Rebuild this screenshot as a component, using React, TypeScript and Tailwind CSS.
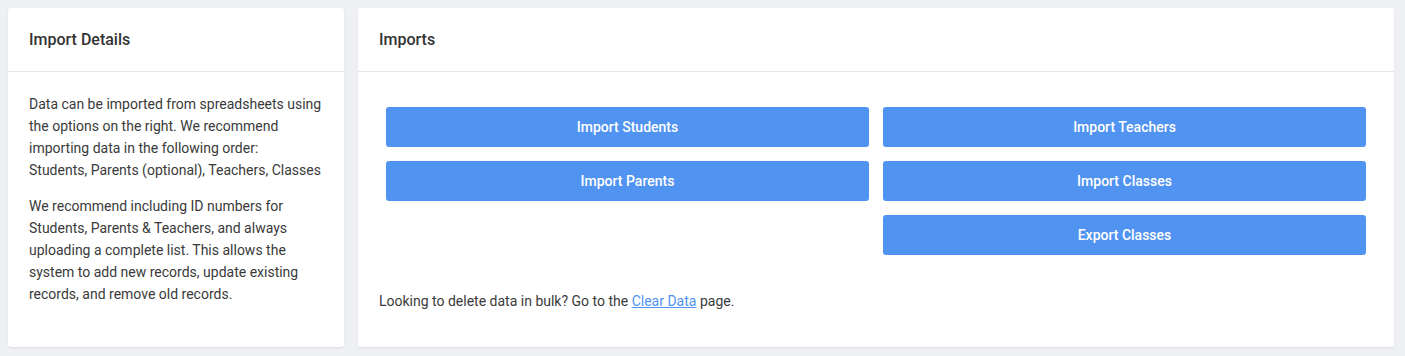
import React from 'react';

const ImportButton: React.FC<{ label: string }> = ({ label }) => (
  <button className="h-10 w-full rounded-[3px] bg-[#5193f0] text-[14px] font-medium text-white">
    {label}
  </button>
);

export default function App() {
  return (
    <div className="min-h-[356px] bg-[#eff0f4] pt-2 pl-2 pr-[11px] pb-[9px] font-['Roboto',sans-serif] text-[#333]">
      <div className="flex items-stretch gap-[14px]">
        {/* Carte de détails */}
        <div className="w-[336px] shrink-0 rounded-[3px] bg-white shadow-[0_1px_2px_rgba(0,0,0,0.08)]">
          <div className="flex h-[64px] items-center border-b border-[#e8e8ec] px-[21px] text-[16px] font-medium">
            Import Details
          </div>
          <div className="px-[21px] pt-[21px] pb-[21px] text-[14px] leading-[22px] text-[#3a3a3a]">
            <p className="mb-[14px]">
              Data can be imported from spreadsheets using the options on the right. We recommend
              importing data in the following order:{' '}
              <span className="whitespace-nowrap">Students, Parents (optional), Teachers, Classes</span>
            </p>
            <p className="mb-[14px]">
              We recommend including ID numbers for Students, Parents &amp; Teachers, and always
              uploading a complete list. This allows the system to add new records, update existing
              records, and remove old records.
            </p>
          </div>
        </div>

        {/* Carte des imports */}
        <div className="flex-1 rounded-[3px] bg-white shadow-[0_1px_2px_rgba(0,0,0,0.08)]">
          <div className="flex h-[64px] items-center border-b border-[#e8e8ec] px-[21px] text-[16px] font-medium">
            Imports
          </div>
          <div className="px-[21px] pt-[35px] pb-[35px]">
            <div className="grid grid-cols-2 gap-[14px] px-[7px]">
              <ImportButton label="Import Students" />
              <ImportButton label="Import Teachers" />
              <ImportButton label="Import Parents" />
              <ImportButton label="Import Classes" />
              <div />
              <ImportButton label="Export Classes" />
            </div>
            <p className="mt-[35px] text-[14px] leading-[22px] text-[#3a3a3a]">
              Looking to delete data in bulk? Go to the{' '}
              <a href="#" className="text-[#5193f0] underline">Clear Data</a> page.
            </p>
          </div>
        </div>
      </div>
    </div>
  );
}
